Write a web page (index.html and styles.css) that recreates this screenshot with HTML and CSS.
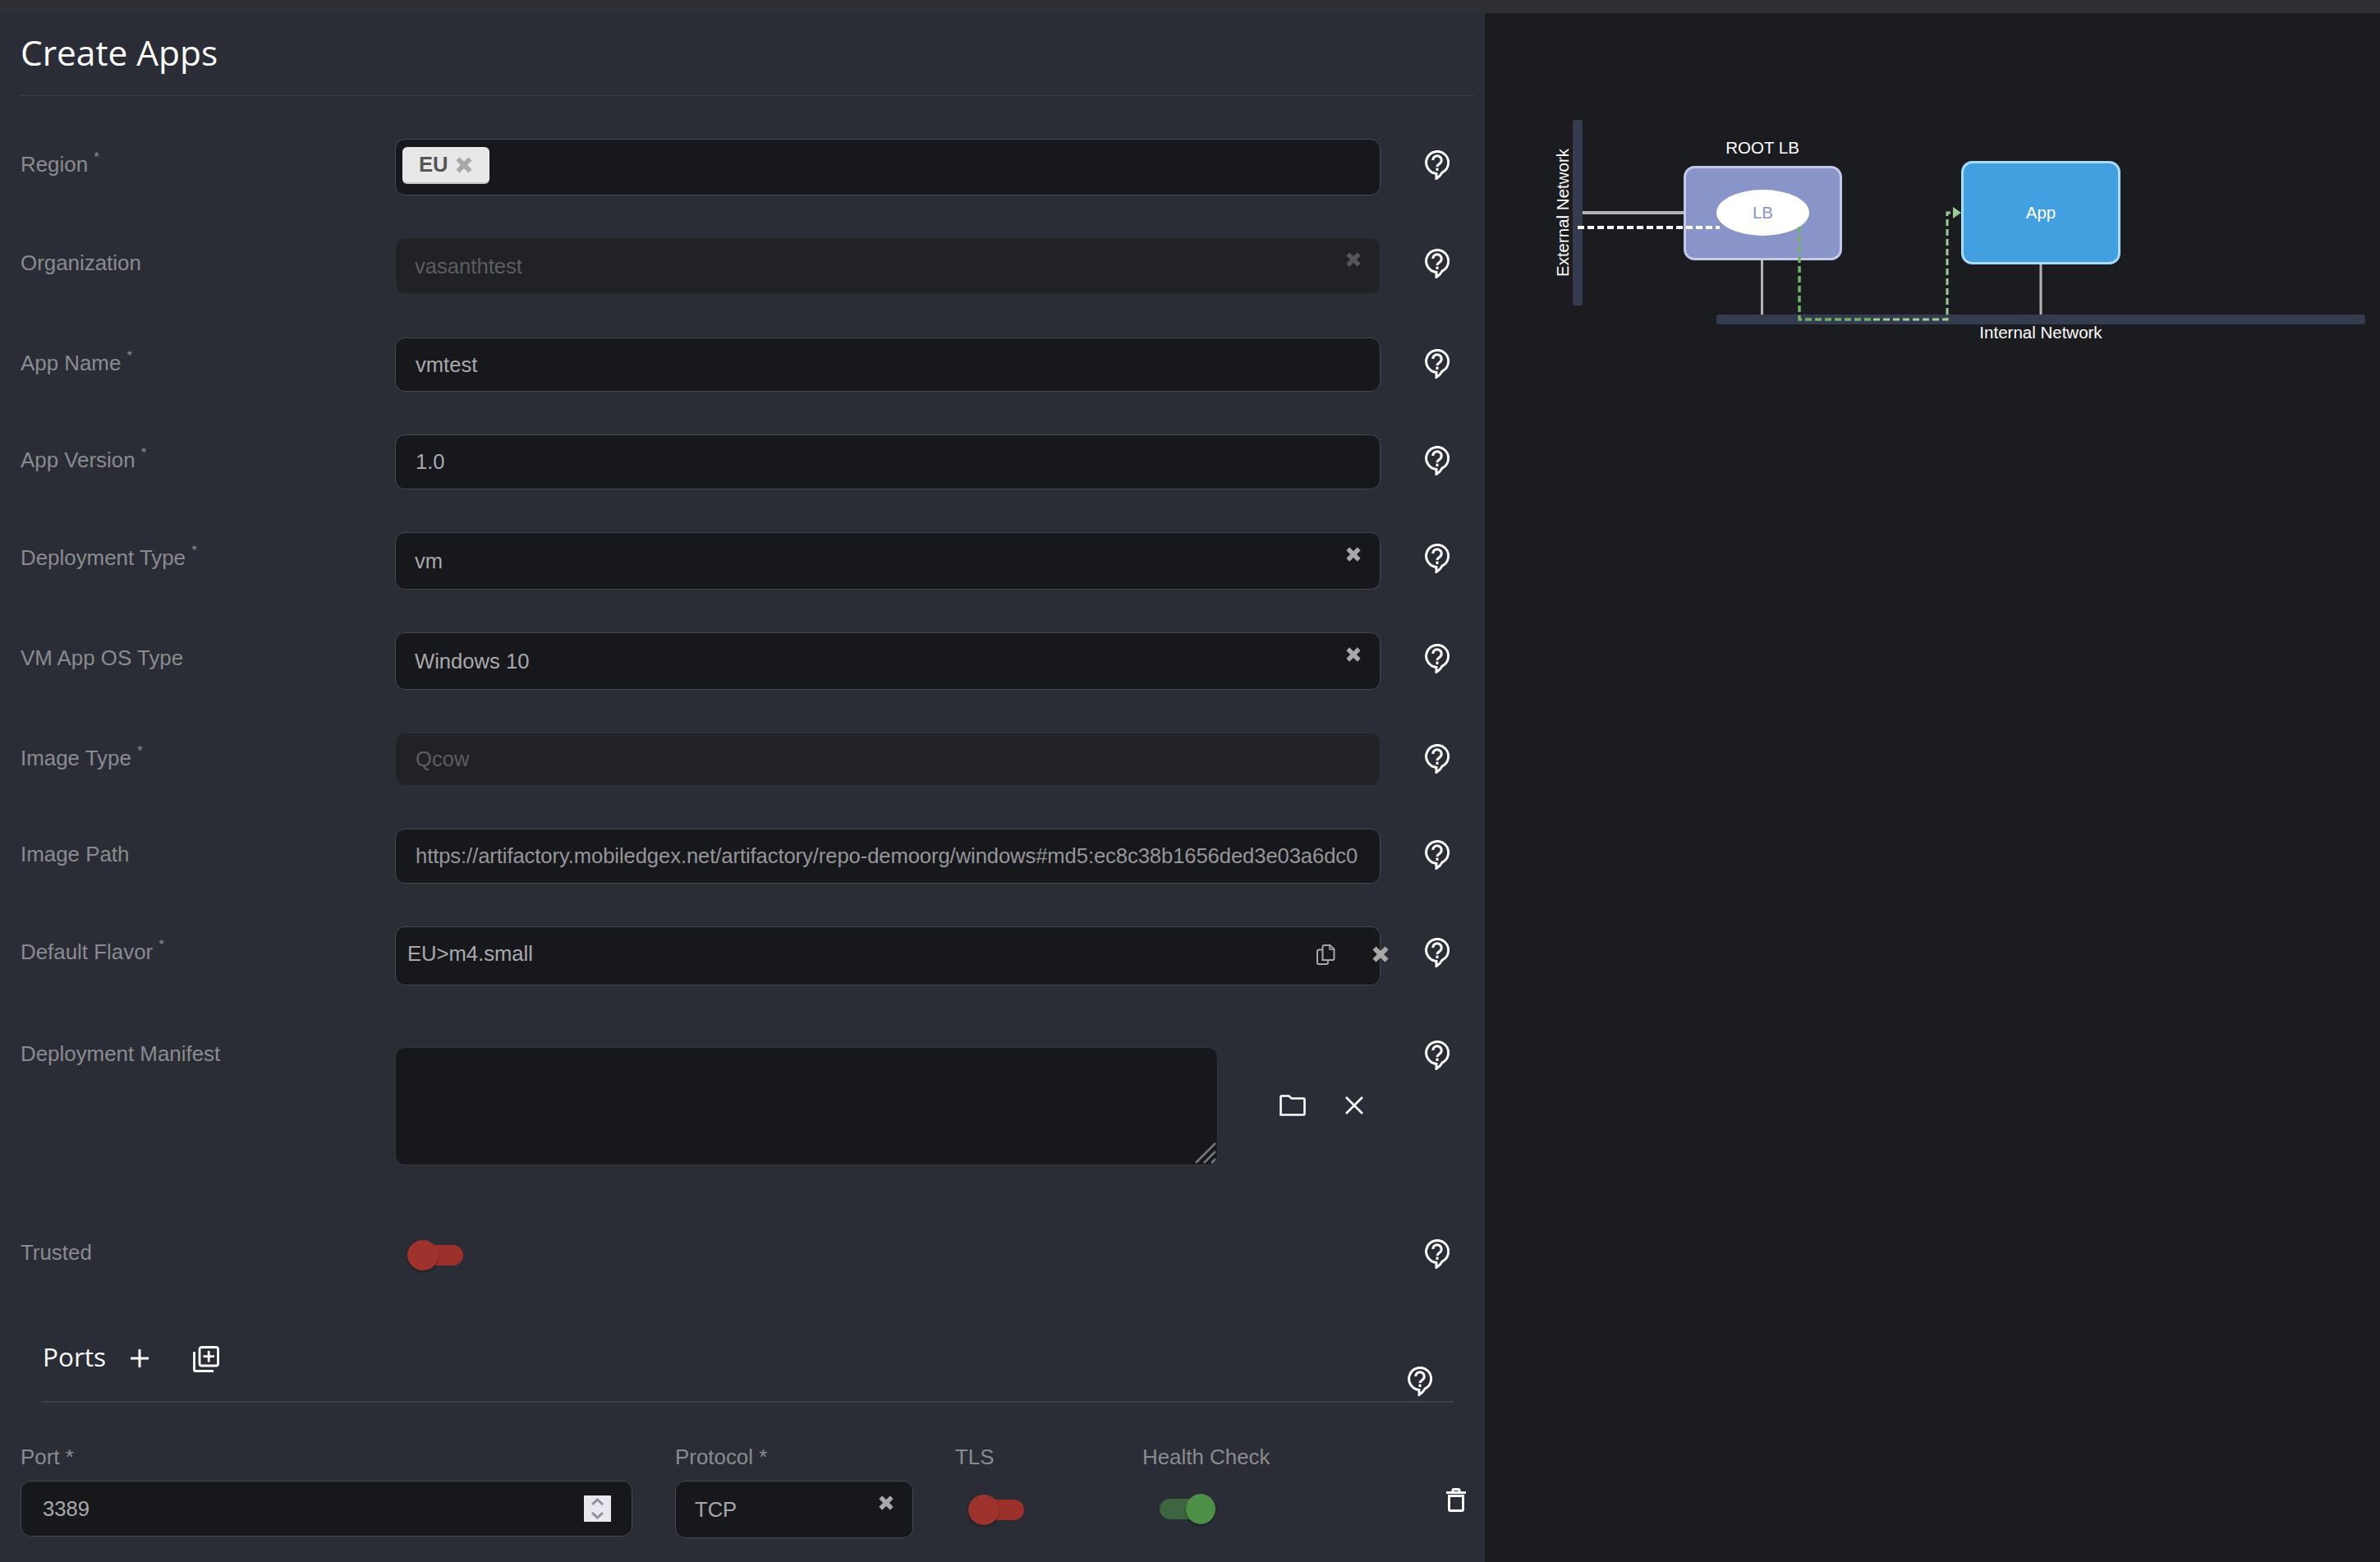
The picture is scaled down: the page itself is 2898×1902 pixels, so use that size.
FILE: index.html
```html
<!DOCTYPE html>
<html lang="en">
<head>
  <meta charset="UTF-8">
  <title>Create Apps</title>
  <link rel="stylesheet" href="styles.css">
</head>
<body>
  <svg class="icon-defs" width="0" height="0">
    <symbol id="icon-help" viewBox="0 0 30 36">
      <path d="M14 28.4A13.5 13.5 0 1 1 21 27.1Q18.5 32 14 34.5Z" fill="none" stroke="#fff" stroke-width="3"/>
      <path d="M9.800 12a5.200 5.200 0 1 1 8.200 4.200c-2 1.300-3 2.100-3 3.800" fill="none" stroke="#fff" stroke-width="3"/>
      <path d="M15 21.500v3.500" stroke="#fff" stroke-width="3"/>
    </symbol>
    <symbol id="icon-clear" viewBox="0 0 20 20">
      <path d="M2.500 2.500l15 15M17.500 2.500l-15 15" fill="none" stroke="currentColor" stroke-width="6"/>
    </symbol>
  </svg>

  <div class="top-bar"></div>

  <div class="layout">
    <!-- form -->
    <div class="form-panel">
      <h1 class="page-title">Create Apps</h1>

      <div class="form-row">
        <div class="row-label">Region <sup>*</sup></div>
        <div class="field field-tags">
          <span class="chip">EU <svg class="chip-x"><use href="#icon-clear"/></svg></span>
        </div>
        <svg class="row-help"><use href="#icon-help"/></svg>
      </div>

      <div class="form-row">
        <div class="row-label">Organization</div>
        <div class="field field-select field-disabled">
          <span>vasanthtest</span>
          <svg class="clear-x clear-dim"><use href="#icon-clear"/></svg>
        </div>
        <svg class="row-help"><use href="#icon-help"/></svg>
      </div>

      <div class="form-row">
        <div class="row-label">App Name <sup>*</sup></div>
        <div class="field field-input field-short">vmtest</div>
        <svg class="row-help"><use href="#icon-help"/></svg>
      </div>

      <div class="form-row">
        <div class="row-label">App Version <sup>*</sup></div>
        <div class="field field-input">1.0</div>
        <svg class="row-help"><use href="#icon-help"/></svg>
      </div>

      <div class="form-row">
        <div class="row-label">Deployment Type <sup>*</sup></div>
        <div class="field field-select">
          <span>vm</span>
          <svg class="clear-x"><use href="#icon-clear"/></svg>
        </div>
        <svg class="row-help"><use href="#icon-help"/></svg>
      </div>

      <div class="form-row">
        <div class="row-label">VM App OS Type</div>
        <div class="field field-select">
          <span>Windows 10</span>
          <svg class="clear-x"><use href="#icon-clear"/></svg>
        </div>
        <svg class="row-help"><use href="#icon-help"/></svg>
      </div>

      <div class="form-row">
        <div class="row-label">Image Type <sup>*</sup></div>
        <div class="field field-input field-disabled field-thin">Qcow</div>
        <svg class="row-help"><use href="#icon-help"/></svg>
      </div>

      <div class="form-row">
        <div class="row-label">Image Path</div>
        <div class="field field-input field-path">https://artifactory.mobiledgex.net/artifactory/repo-demoorg/windows#md5:ec8c38b1656ded3e03a6dc0</div>
        <svg class="row-help"><use href="#icon-help"/></svg>
      </div>

      <div class="form-row row-flavor">
        <div class="row-label">Default Flavor <sup>*</sup></div>
        <div class="field field-flavor">
          <span>EU&gt;m4.small</span>
          <svg class="copy-icon" viewBox="0 0 23 25">
            <path d="M7.500 19V3a2 2 0 0 1 2-2h7l5 5v11a2 2 0 0 1-2 2z" fill="none" stroke="#a8a8a8" stroke-width="2"/>
            <path d="M16 1v5h5.500" fill="none" stroke="#a8a8a8" stroke-width="1.500"/>
            <path d="M7.500 6.500H3a2 2 0 0 0-2 2V22a2 2 0 0 0 2 2h9a2 2 0 0 0 2-2v-3" fill="none" stroke="#a8a8a8" stroke-width="2"/>
          </svg>
          <svg class="flavor-x"><use href="#icon-clear"/></svg>
        </div>
        <svg class="row-help"><use href="#icon-help"/></svg>
      </div>

      <div class="form-row row-manifest">
        <div class="row-label">Deployment Manifest</div>
        <div class="manifest-wrap">
          <div class="manifest-box">
            <svg class="resize-grip" viewBox="0 0 26 26">
              <path d="M1 25L25 1M11 25L25 11M20 25l5-5" fill="none" stroke="#77787c" stroke-width="2.500"/>
            </svg>
          </div>
          <svg class="folder-icon" viewBox="0 0 32 26">
            <path d="M1.500 24.500V2.500a1 1 0 0 1 1-1h9l3 3h15a1 1 0 0 1 1 1v18a1 1 0 0 1-1 1z" fill="none" stroke="#fff" stroke-width="2.600"/>
          </svg>
          <svg class="close-icon" viewBox="0 0 22 22">
            <path d="M1 1l20 20M21 1L1 21" fill="none" stroke="#fff" stroke-width="2.600"/>
          </svg>
        </div>
        <svg class="row-help"><use href="#icon-help"/></svg>
      </div>

      <div class="form-row row-trusted">
        <div class="row-label">Trusted</div>
        <div class="toggle-cell"><span class="toggle toggle-off"></span></div>
        <svg class="row-help"><use href="#icon-help"/></svg>
      </div>

      <!-- ports -->
      <div class="section-head">
        <span class="section-title">Ports</span>
        <svg class="plus-icon" viewBox="0 0 22 22">
          <path d="M11 0v22M0 11h22" fill="none" stroke="#fff" stroke-width="3"/>
        </svg>
        <svg class="library-icon" viewBox="0 0 32 32">
          <path d="M1.500 7v22a1.500 1.500 0 0 0 1.500 1.500h22" fill="none" stroke="#fff" stroke-width="2.800"/>
          <rect x="8" y="1.500" width="22.500" height="22.500" rx="2.500" fill="none" stroke="#fff" stroke-width="2.800"/>
          <path d="M19.200 6v13.500M12.500 12.700h13.500" fill="none" stroke="#fff" stroke-width="2.800"/>
        </svg>
        <svg class="section-help"><use href="#icon-help"/></svg>
      </div>

      <div class="port-row">
        <div class="port-col col-port">
          <div class="port-label">Port *</div>
          <div class="field field-number">
            <span>3389</span>
            <span class="spinner">
              <svg viewBox="0 0 33 32">
                <path d="M10 11l6.500-6 6.500 6M10 21l6.500 6 6.500-6" fill="none" stroke="#8f8f9f" stroke-width="3"/>
              </svg>
            </span>
          </div>
        </div>
        <div class="port-col col-protocol">
          <div class="port-label">Protocol *</div>
          <div class="field field-select field-protocol">
            <span>TCP</span>
            <svg class="clear-x"><use href="#icon-clear"/></svg>
          </div>
        </div>
        <div class="port-col col-tls">
          <div class="port-label">TLS</div>
          <span class="toggle toggle-off toggle-tls"></span>
        </div>
        <div class="port-col col-health">
          <div class="port-label">Health Check</div>
          <span class="toggle toggle-on"></span>
        </div>
        <svg class="trash-icon" viewBox="0 0 24 29">
          <path d="M0 5.500h24M8 4V2.500a1 1 0 0 1 1-1h6a1 1 0 0 1 1 1V4" fill="none" stroke="#fff" stroke-width="3"/>
          <path d="M3.500 9.500V26a1.500 1.500 0 0 0 1.500 1.500h14a1.500 1.500 0 0 0 1.500-1.500V9.500z" fill="none" stroke="#fff" stroke-width="3"/>
        </svg>
      </div>
    </div>

    <!-- diagram -->
    <div class="diagram-panel">
      <svg class="diagram" viewBox="1808 16 1090 400">
        <rect x="1915" y="146" width="12" height="226" rx="3" fill="#363c4f"/>
        <rect x="2090" y="383" width="790" height="12" rx="3" fill="#363c4f"/>
        <path d="M1927 259h123" stroke="#b5b5b5" stroke-width="4"/>
        <path d="M2145.500 317v66M2485 322v61" stroke="#b5b5b5" stroke-width="3"/>

        <rect x="2051.500" y="203.500" width="190" height="112" rx="12" fill="#8994c8" stroke="#c3c9e6" stroke-width="3"/>
        <ellipse cx="2146.500" cy="259" rx="56.500" ry="28" fill="#fff"/>
        <rect x="2389.500" y="197.500" width="191" height="123" rx="12" fill="#429fe0" stroke="#a8dcfa" stroke-width="3"/>

        <path d="M1921 277h173" stroke="#fff" stroke-width="4" stroke-dasharray="8 4"/>
        <path d="M2191 276v113h90" fill="none" stroke="#6db368" stroke-width="3.500" stroke-dasharray="8 4"/>
        <path d="M2281 389h90v-130h8" fill="none" stroke="#9ccd97" stroke-width="3" stroke-dasharray="8 4"/>
        <path d="M2378 252l10 7-10 7z" fill="#9ccd97"/>

        <text class="diagram-text" x="2146" y="187" text-anchor="middle">ROOT LB</text>
        <text class="diagram-text diagram-lb" x="2146.500" y="266" text-anchor="middle">LB</text>
        <text class="diagram-text" x="2485" y="266" text-anchor="middle">App</text>
        <text class="diagram-text" x="2485" y="412" text-anchor="middle">Internal Network</text>
        <text class="diagram-text" transform="translate(1910 259) rotate(-90)" text-anchor="middle">External Network</text>
      </svg>
    </div>
  </div>
</body>
</html>
```

FILE: styles.css
```css
html, body {
  margin: 0;
  height: 1902px;
  overflow: hidden;
}
body {
  background: #2a2d35;
  font-family: "Liberation Sans", Arial, sans-serif;
  font-size: 25.6px;
  color: #a9a9ab;
}
.icon-defs {
  display: block;
  height: 0;
}
.top-bar {
  height: 16px;
  background: #2d2f34;
}
.layout {
  display: flex;
  height: 1886px;
}
.form-panel {
  width: 1808px;
  box-sizing: border-box;
  padding-left: 25px;
  overflow: hidden;
}
.diagram-panel {
  flex: 1;
  background: #1b1c20;
}
.diagram {
  display: block;
  width: 1090px;
  height: 400px;
}
.diagram-text {
  font-family: "Liberation Sans", Arial, sans-serif;
  font-size: 20.5px;
  fill: #fff;
}
.diagram-lb {
  fill: #8994c8;
}

/* title */
.page-title {
  margin: 0 13px 52px 0;
  height: 101px;
  box-sizing: border-box;
  padding-top: 21px;
  border-bottom: 1px solid #3d4045;
  font-family: "Open Sans", sans-serif;
  font-size: 42.4px;
  line-height: 54px;
  font-weight: 400;
  color: #fff;
}

/* rows */
.form-row {
  display: flex;
  align-items: flex-start;
  margin-bottom: 52px;
}
.row-label {
  width: 456px;
  padding-top: 16px;
  font-size: 25.9px;
  line-height: 30px;
  color: #8a8b8f;
}
.row-label sup {
  font-size: 17px;
  line-height: 0;
  vertical-align: 12px;
}
.row-help {
  width: 30px;
  height: 36px;
  margin: 14px 0 0 54px;
}
.row-flavor {
  margin-bottom: 75px;
}
.row-manifest .row-label {
  padding-top: 0;
  margin-top: -7px;
}
.row-manifest .row-help {
  margin-top: -8px;
}
.row-manifest {
  margin-bottom: 91px;
}
.row-trusted {
  margin-bottom: 89px;
}
.row-trusted .row-label {
  padding-top: 0;
}
.row-trusted .row-help {
  margin-top: -1px;
}
.toggle-cell {
  width: 1200px;
  padding-left: 15px;
  box-sizing: border-box;
}

/* fields */
.field {
  width: 1200px;
  box-sizing: border-box;
  display: flex;
  align-items: center;
  padding: 0 23px;
  background: #17181c;
  border: 1px solid #46484e;
  border-radius: 12px;
}
.field-tags {
  height: 69px;
  margin-bottom: -1px;
  padding: 9px 8px 0;
  align-items: flex-start;
}
.field-select {
  height: 70px;
  justify-content: space-between;
}
.field-input {
  height: 67px;
  padding-left: 24px;
}
.field-short {
  height: 66px;
}
.field-thin {
  height: 65px;
}
.field-path {
  padding-right: 10px;
  white-space: nowrap;
  overflow: hidden;
  letter-spacing: -0.08px;
  color: #969699;
}
.field-disabled {
  background: #202226;
  border-color: #303238;
  color: #5c5d60;
}
.field-flavor {
  height: 72px;
  padding: 0 0 6px 14px;
  position: relative;
}
.field-flavor span {
  flex: 1;
}
.copy-icon {
  width: 23px;
  height: 25px;
  margin: 3px 54px 0 0;
}
.flavor-x {
  position: absolute;
  right: -11px;
  top: 23px;
  width: 20px;
  height: 20px;
  color: #a8a8a8;
}
.clear-x {
  align-self: flex-start;
  width: 18px;
  height: 18px;
  margin: 17px 0 0 0;
  color: #a8a8a8;
}
.clear-dim {
  color: #55565a;
}
.chip {
  display: flex;
  align-items: center;
  box-sizing: border-box;
  width: 106px;
  height: 45px;
  padding-left: 20px;
  background: #e8e8e8;
  border-bottom: 2px solid #c4c4c4;
  border-radius: 6px;
  font-weight: 700;
  color: #555;
}
.chip-x {
  width: 20px;
  height: 20px;
  margin-left: 9px;
  color: #a8a8a8;
}

/* manifest */
.manifest-wrap {
  width: 1200px;
  height: 144px;
  display: flex;
  align-items: center;
}
.manifest-box {
  width: 1002px;
  height: 144px;
  box-sizing: border-box;
  background: #17181c;
  border: 1px solid #34363b;
  border-radius: 12px;
  position: relative;
}
.resize-grip {
  position: absolute;
  right: 1px;
  bottom: 1px;
  width: 26px;
  height: 26px;
}
.folder-icon {
  width: 32px;
  height: 26px;
  margin: 0 0 3px 75px;
}
.close-icon {
  width: 22px;
  height: 22px;
  margin: 0 0 3px 48px;
}

/* toggles */
.toggle {
  display: block;
  width: 68px;
  height: 37px;
  position: relative;
}
.toggle::before {
  content: "";
  position: absolute;
  top: 6px;
  width: 58px;
  height: 25px;
  border-radius: 13px;
}
.toggle::after {
  content: "";
  position: absolute;
  top: 0;
  width: 38px;
  height: 37px;
  border-radius: 50%;
  box-shadow: 0 2px 3px rgba(0, 0, 0, 0.35);
}
.toggle-off::before {
  right: 0;
  background: #9c312c;
}
.toggle-off::after {
  left: 0;
  background: #9e322d;
}
.toggle-on::before {
  left: 0;
  background: #3d6640;
}
.toggle-on::after {
  right: 0;
  width: 36px;
  background: #4e8f48;
}

/* ports */
.section-head {
  display: flex;
  align-items: flex-start;
  height: 70px;
  margin: 0 38px 0 25px;
  padding-left: 2px;
  border-bottom: 2px solid #3d4045;
}
.section-title {
  font-family: "Open Sans", sans-serif;
  font-size: 31.5px;
  line-height: 32px;
  color: #fff;
}
.plus-icon {
  width: 22px;
  height: 22px;
  margin: 7px 0 0 30px;
}
.library-icon {
  width: 32px;
  height: 32px;
  margin: 3px 0 0 54px;
}
.section-help {
  width: 30px;
  height: 36px;
  margin: 28px 26px 0 auto;
}
.port-row {
  display: flex;
  align-items: flex-start;
  margin-top: 51px;
}
.port-col {
  display: flex;
  flex-direction: column;
  gap: 14px;
}
.port-label {
  font-size: 25.9px;
  line-height: 30px;
  color: #8a8b8f;
}
.col-port {
  width: 745px;
  margin-right: 52px;
}
.col-protocol {
  width: 290px;
  margin-right: 51px;
}
.col-tls {
  width: 228px;
}
.col-health {
  width: 370px;
}
.field-number {
  width: 745px;
  height: 68px;
  padding: 0 25px 0 26px;
  justify-content: space-between;
}
.field-protocol {
  width: 290px;
}
.spinner {
  display: block;
  width: 33px;
  height: 32px;
  background: #e8e8ee;
}
.spinner svg {
  display: block;
  width: 33px;
  height: 32px;
}
.toggle-tls {
  margin: 17px 0 0 16px;
}
.toggle-on {
  margin: 16px 0 0 21px;
}
.trash-icon {
  width: 24px;
  height: 29px;
  margin-top: 53px;
}
```
